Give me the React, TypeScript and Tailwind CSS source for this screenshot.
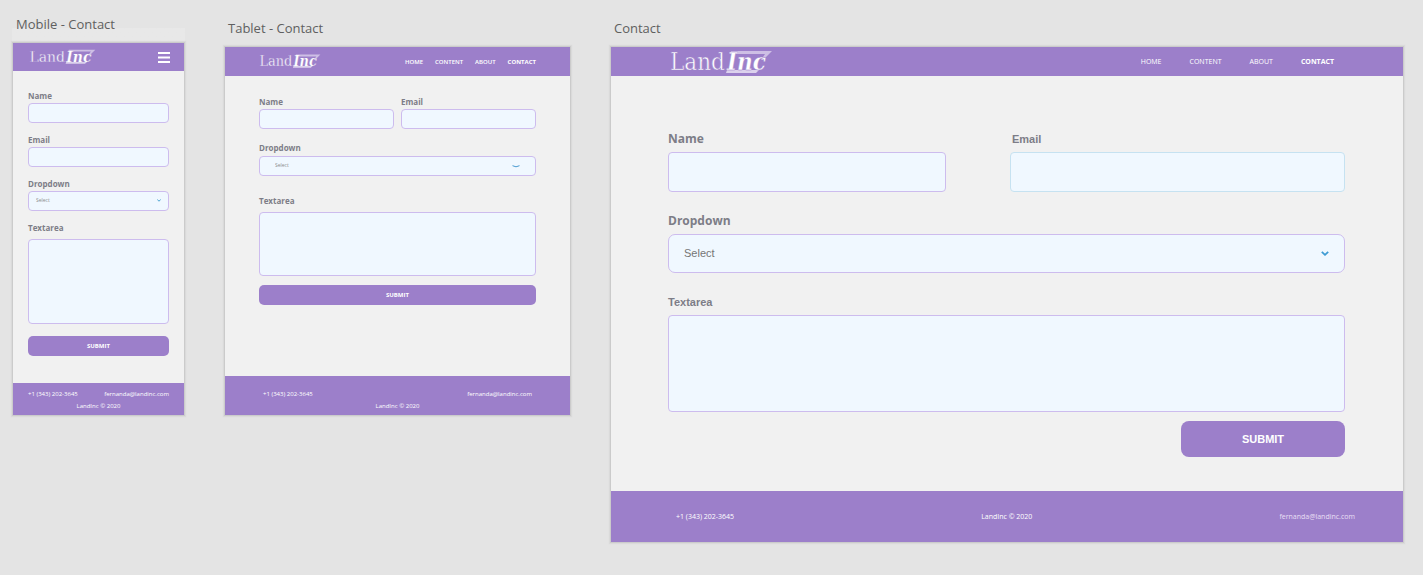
import type { ReactNode } from "react";

const sans = "font-['Open_Sans','Noto_Sans',sans-serif]";
const arial = "font-['Liberation_Sans',Arial,sans-serif]";
const field = "block w-full appearance-none border bg-[#f0f8ff] outline-none";
const lilac = "rounded-[4px] border-[#cdbcee]";
const smallLabel = "block text-[8px] leading-[12px] font-bold text-[#7d7d87]";
const largeLabel = "block leading-[18px] font-bold text-[#7d7d87]";

function Logo({ className }: { className: string }) {
  return (
    <svg viewBox="0 0 102 24" className={`overflow-visible ${className}`} role="img" aria-label="LandInc">
      <path d="M60 1H101L92 10H90L94 4H59Z" fill="#fff" opacity="0.5" />
      <path d="M56 20H88L85 23H55Z" fill="#fff" opacity="0.65" />
      <g fill="#fff" stroke="#9c7fca">
        <text x="-1" y="20" fontSize="24" strokeWidth="0.5" fontFamily="'DejaVu Serif Condensed','DejaVu Serif',serif">
          Land
        </text>
        <text
          x="56"
          y="20"
          fontSize="24"
          strokeWidth="0.3"
          fontWeight="700"
          fontStyle="italic"
          fontFamily="'DejaVu Serif Condensed','DejaVu Serif',serif"
        >
          Inc
        </text>
      </g>
    </svg>
  );
}

function Nav({ className }: { className: string }) {
  return (
    <nav className={`flex items-center pt-px text-white ${className}`}>
      <a href="#home">HOME</a>
      <a href="#content">CONTENT</a>
      <a href="#about">ABOUT</a>
      <a href="#contact" className="font-bold" aria-current="page">
        CONTACT
      </a>
    </nav>
  );
}

function Select({ id, className, chevron }: { id: string; className: string; chevron: ReactNode }) {
  return (
    <div className="relative">
      <select id={id} className={`${field} ${className}`}>
        <option>Select</option>
      </select>
      {chevron}
    </div>
  );
}

function Artboard({ title, titleClass, children }: { title: string; titleClass: string; children: ReactNode }) {
  return (
    <section className="min-w-0">
      <h2 className={`pl-1 text-[13px] leading-[20px] text-[#5f5f5f] ${titleClass}`}>{title}</h2>
      <div className="border border-[#cbcbcb] bg-[#f1f1f1] shadow-[0_0_1px_1px_#dadada]">{children}</div>
    </section>
  );
}

function Mobile() {
  return (
    <Artboard
      title="Mobile - Contact"
      titleClass="h-[42px] pt-[14px] bg-linear-to-b from-transparent from-[28px] to-[#e8e8e8] to-[28px]"
    >
      <header className="flex h-[28px] items-center justify-between bg-[#9c7fca] pr-[14px] pl-[17px]">
        <Logo className="w-[66px]" />
        <button type="button" aria-label="Open menu">
          <svg viewBox="0 0 12 11" className="block w-3" fill="#fff">
            <path d="M0 0h12v2H0zM0 4.5h12v2H0zM0 9h12v2H0z" />
          </svg>
        </button>
      </header>
      <form className="px-[15px] pt-[19px] pb-[27px]">
        <div className="flex flex-col gap-[11px]">
          <div>
            <label htmlFor="m-name" className={smallLabel}>Name</label>
            <input id="m-name" className={`${field} ${lilac} mt-px h-5`} />
          </div>
          <div>
            <label htmlFor="m-email" className={smallLabel}>Email</label>
            <input id="m-email" type="email" className={`${field} ${lilac} mt-px h-5`} />
          </div>
          <div>
            <label htmlFor="m-drop" className={`${smallLabel} mb-px`}>Dropdown</label>
            <Select
              id="m-drop"
              className={`${lilac} h-5 pl-[7px] text-[5px] text-[#8a8a8a]`}
              chevron={
                <svg viewBox="0 0 4 3" className="pointer-events-none absolute top-2 right-2 w-1" fill="none" stroke="#4aa3d0">
                  <path d="M0.3 0.6L2 2.2L3.7 0.6" />
                </svg>
              }
            />
          </div>
          <div>
            <label htmlFor="m-text" className={smallLabel}>Textarea</label>
            <textarea id="m-text" className={`${field} ${lilac} mt-[5px] h-[85px] resize-none`} />
          </div>
        </div>
        <button type="button" className="mt-3 block h-5 w-full rounded-[5px] bg-[#9c7fca] text-[6px] font-bold text-white">
          SUBMIT
        </button>
      </form>
      <footer className="h-8 bg-[#9c7fca] px-[15px] pt-[5px] text-[6px] leading-[12px] text-white">
        <div className="flex justify-between">
          <span>+1 (343) 202-3645</span>
          <a href="mailto:fernanda@landinc.com">fernanda@landinc.com</a>
        </div>
        <p className="text-center">LandInc © 2020</p>
      </footer>
    </Artboard>
  );
}

function Tablet() {
  return (
    <Artboard title="Tablet - Contact" titleClass="h-[46px] pt-[18px]">
      <header className="flex h-[29px] items-center justify-between bg-[#9c7fca] pr-[34px] pl-[35px]">
        <Logo className="w-[61px]" />
        <Nav className="gap-3 text-[6px] font-semibold" />
      </header>
      <form className="px-[34px] pt-5 pb-[71px]">
        <div className="grid grid-cols-2 gap-[7px]">
          <div>
            <label htmlFor="t-name" className={smallLabel}>Name</label>
            <input id="t-name" className={`${field} ${lilac} mt-px h-5`} />
          </div>
          <div>
            <label htmlFor="t-email" className={smallLabel}>Email</label>
            <input id="t-email" type="email" className={`${field} ${lilac} mt-px h-5`} />
          </div>
        </div>
        <label htmlFor="t-drop" className={`${smallLabel} mt-[13px] mb-0.5`}>Dropdown</label>
        <Select
          id="t-drop"
          className={`${lilac} h-5 pl-[15px] text-[5px] text-[#8a8a8a]`}
          chevron={
            <svg viewBox="0 0 8 3" className="pointer-events-none absolute top-[9px] right-4 w-2" fill="none" stroke="#4a9bd0">
              <path d="M0.5 0.7L4 1.8L7.5 0.7" />
            </svg>
          }
        />
        <label htmlFor="t-text" className={`${smallLabel} mt-[19px]`}>Textarea</label>
        <textarea id="t-text" className={`${field} ${lilac} mt-[5px] h-16 resize-none`} />
        <button type="button" className="mt-[9px] block h-5 w-full rounded-[5px] bg-[#9c7fca] text-[6px] font-bold text-white">
          SUBMIT
        </button>
      </form>
      <footer className="h-[39px] bg-[#9c7fca] px-[38px] pt-3 text-[6px] leading-[12px] text-white">
        <div className="flex justify-between">
          <span>+1 (343) 202-3645</span>
          <a href="mailto:fernanda@landinc.com">fernanda@landinc.com</a>
        </div>
        <p className="text-center">LandInc © 2020</p>
      </footer>
    </Artboard>
  );
}

function Desktop() {
  return (
    <Artboard title="Contact" titleClass="h-[46px] pt-[18px]">
      <header className="flex h-[29px] items-center justify-between bg-[#9c7fca] pr-[69px] pl-[60px]">
        <Logo className="w-[102px]" />
        <Nav className="gap-7 text-[7px]" />
      </header>
      <form className="pt-[54px] pr-[58px] pb-[34px] pl-[57px]">
        <div className="grid grid-cols-[278fr_335fr] gap-16">
          <div>
            <label htmlFor="d-name" className={`${largeLabel} text-[12px]`}>Name</label>
            <input id="d-name" className={`${field} ${lilac} mt-1 h-10`} />
          </div>
          <div>
            <label htmlFor="d-email" className={`${arial} ${largeLabel} pl-[2px] text-[11px]`}>
              Email
            </label>
            <input id="d-email" type="email" className={`${field} mt-1 h-10 rounded-[4px] border-[#c6e2f1]`} />
          </div>
        </div>
        <label htmlFor="d-drop" className={`${largeLabel} mt-5 mb-1 text-[12px]`}>
          Dropdown
        </label>
        <Select
          id="d-drop"
          className={`${arial} h-[39px] rounded-[7px] border-[#cdbcee] pl-[15px] text-[11px] text-[#757575]`}
          chevron={
            <svg
              viewBox="0 0 8 5"
              className="pointer-events-none absolute top-[17px] right-4 w-2"
              fill="none"
              stroke="#3d9bd3"
              strokeWidth="1.8"
            >
              <path d="M0.8 0.8L4 3.8L7.2 0.8" />
            </svg>
          }
        />
        <label htmlFor="d-text" className={`${arial} ${largeLabel} mt-5 text-[11px]`}>
          Textarea
        </label>
        <textarea id="d-text" className={`${field} ${lilac} mt-1 h-[97px] resize-none`} />
        <button
          type="button"
          className={`${arial} mt-[9px] ml-auto block h-9 w-[164px] rounded-[8px] bg-[#9c7fca] text-[11px] font-bold text-white`}
        >
          SUBMIT
        </button>
      </form>
      <footer className="flex h-[51px] items-center justify-between bg-[#9c7fca] pt-0.5 pr-12 pl-[65px] text-[7px] font-medium text-white">
        <span>+1 (343) 202-3645</span>
        <span>LandInc © 2020</span>
        <a href="mailto:fernanda@landinc.com" className="text-[#e9dff5]">
          fernanda@landinc.com
        </a>
      </footer>
    </Artboard>
  );
}

export default function App() {
  return (
    <main
      className={`${sans} grid min-h-screen grid-cols-[173fr_347fr_794fr] items-start gap-[39px] bg-[#e4e4e4] pr-[19px] pl-3`}
    >
      <Mobile />
      <Tablet />
      <Desktop />
    </main>
  );
}
